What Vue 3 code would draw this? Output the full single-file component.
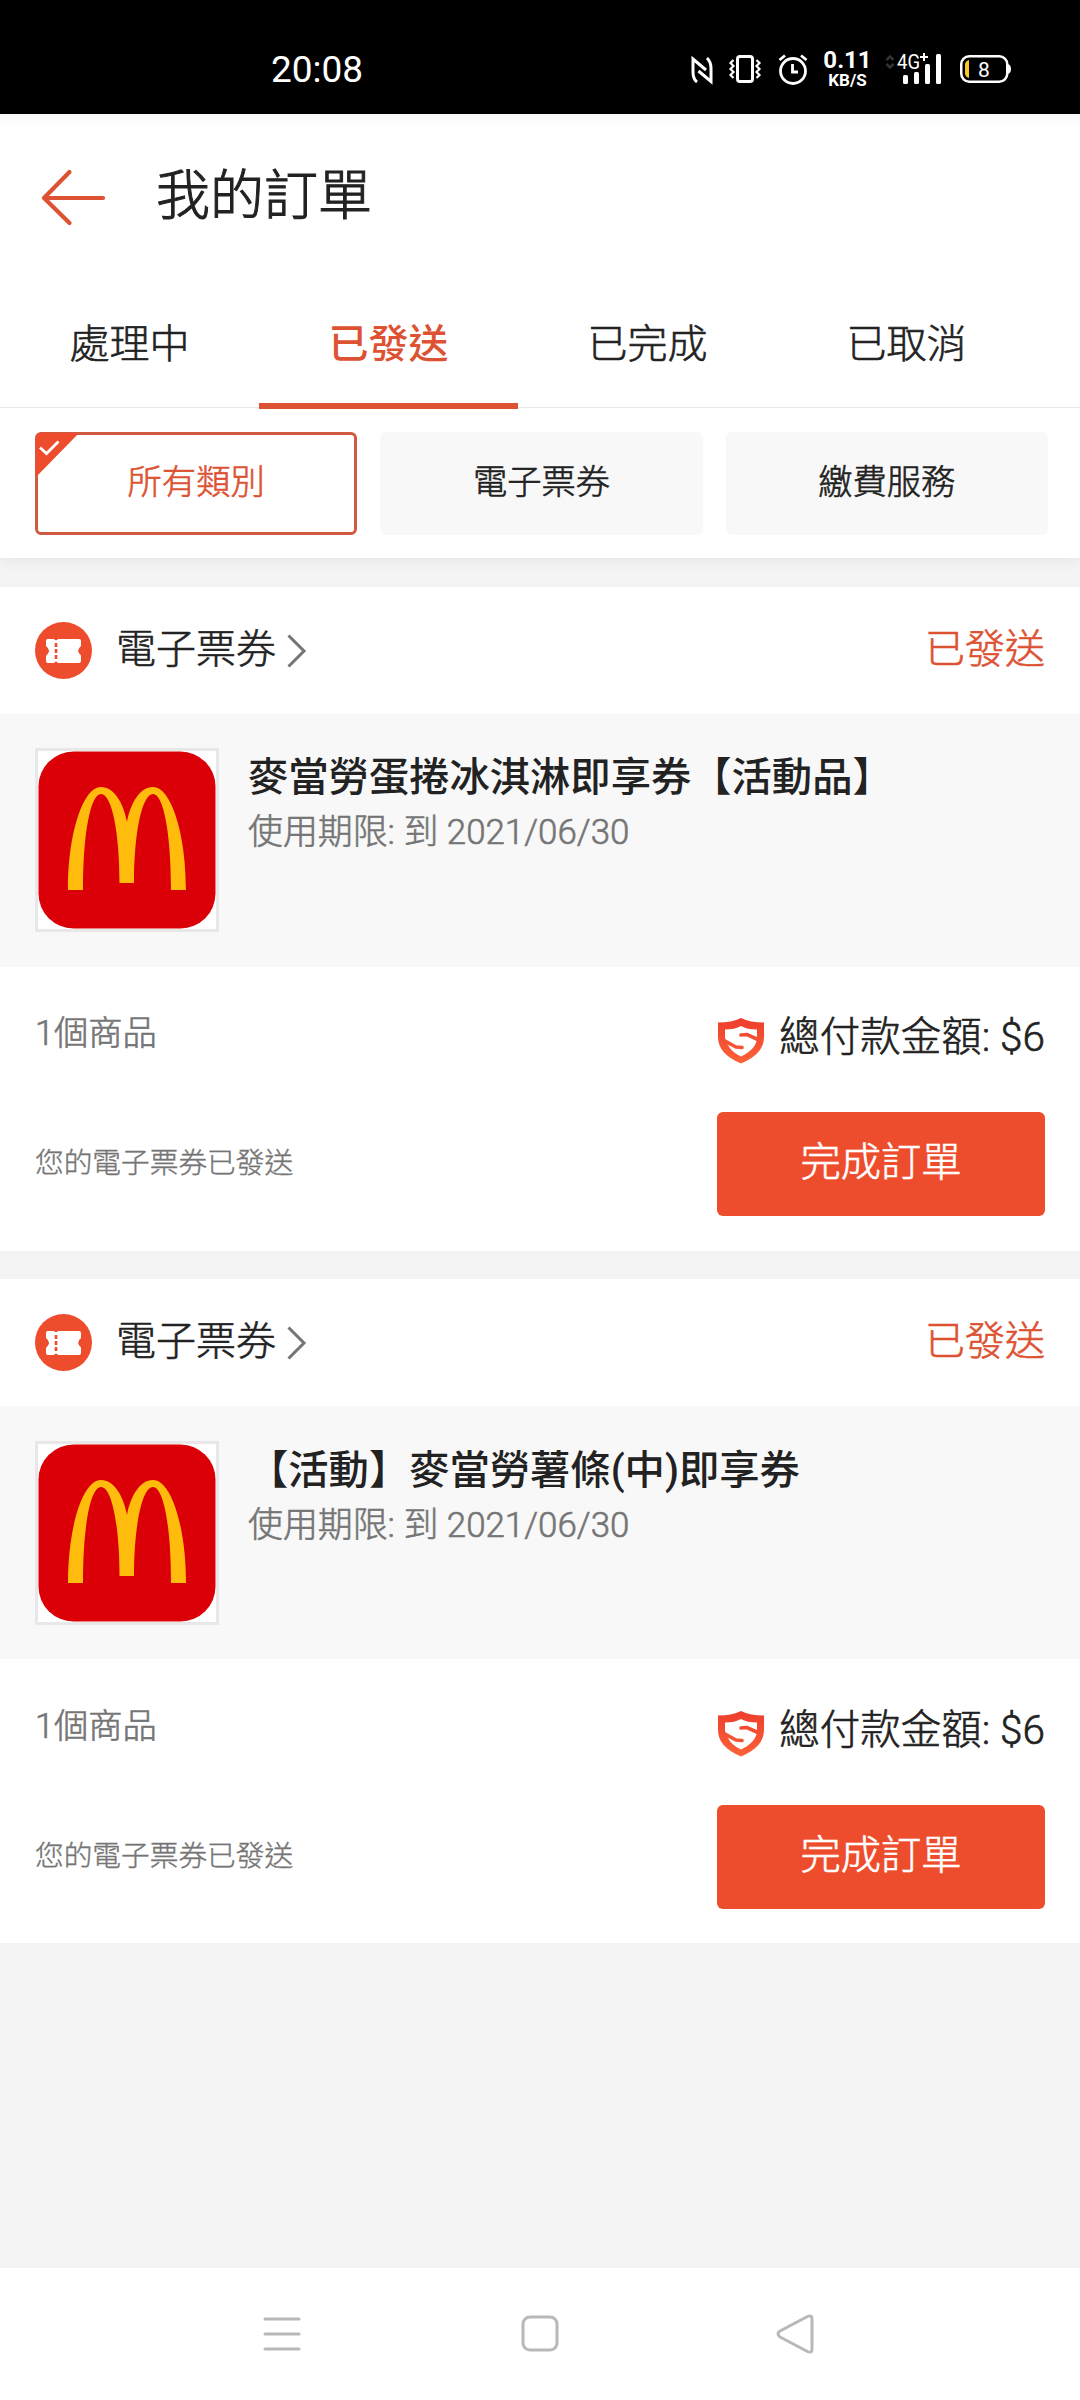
<script setup>
const tabs = ['處理中', '已發送', '已完成', '已取消']
const activeTab = '已發送'
const filters = ['所有類別', '電子票券', '繳費服務']
const activeFilter = '所有類別'
const orders = [
  { id: 1, title: '麥當勞蛋捲冰淇淋即享券【活動品】', expiry: '使用期限: 到 2021/06/30' },
  { id: 2, title: '【活動】麥當勞薯條(中)即享券', expiry: '使用期限: 到 2021/06/30' },
]
</script>

<template>
  <div class="screen">
    <div class="status">
      <span class="clock">20:08</span>
      <div class="indicators">
        <svg class="nfc" width="22" height="28" viewBox="0 0 22 28" fill="none" stroke="#fff" stroke-width="3">
          <path d="M6 26 Q2 23 2 16 V3 L15 14" />
          <path d="M7.500 15 L20 25.500 V12 Q20 6 16 2" />
        </svg>
        <svg class="vibrate" width="32" height="28" viewBox="0 0 32 28" fill="none" stroke="#fff">
          <rect x="8.500" y="1.500" width="15" height="25" rx="2.500" stroke-width="3" />
          <path d="M4.500 5 L1.500 8 L4.500 11 L1.500 14 L4.500 17 L1.500 20 L4.500 23 M27.500 5 L30.500 8 L27.500 11 L30.500 14 L27.500 17 L30.500 20 L27.500 23" stroke-width="2.200" />
        </svg>
        <svg class="alarm" width="30" height="31" viewBox="0 0 30 31" fill="none" stroke="#fff" stroke-width="2.800">
          <circle cx="15" cy="17" r="12.500" />
          <path d="M1.500 6 L7 1.500 M28.500 6 L23 1.500" />
          <path d="M14.500 10 V18 H20" />
        </svg>
        <div class="speed"><b class="rate">0.11</b><b class="unit">KB/S</b></div>
        <svg class="signal" width="57" height="32" viewBox="0 0 57 32">
          <path d="M1.500 7 L5 3.500 L8.500 7 M1.500 11 L5 14.500 L8.500 11" fill="none" stroke="#333" stroke-width="2.500" />
          <text x="12" y="16" class="network" textLength="23" lengthAdjust="spacingAndGlyphs">4G</text>
          <path d="M39 0 V8 M35 4 H43" stroke="#fff" stroke-width="2" />
          <g fill="#fff">
            <rect x="18" y="22" width="5" height="9" rx="1.500" />
            <rect x="29" y="19" width="5" height="12" rx="1.500" />
            <rect x="40" y="11" width="5" height="20" rx="1.500" />
            <rect x="51" y="1" width="5" height="30" rx="1.500" />
          </g>
        </svg>
        <svg class="battery" width="51" height="28" viewBox="0 0 51 28">
          <rect x="1.250" y="1.250" width="46" height="25.500" rx="8" fill="none" stroke="#fff" stroke-width="2.500" />
          <path d="M48 9 Q51 10 51 14 Q51 18 48 19 Z" fill="#fff" />
          <path d="M9 5 V23 Q5 22 5 18 V10 Q5 6 9 5 Z" fill="#fbc926" />
          <text x="24" y="22" class="charge">8</text>
        </svg>
      </div>
    </div>

    <header class="header">
      <svg width="64" height="56" viewBox="0 0 64 56" fill="none" stroke="#dd5232" stroke-width="4.200" stroke-linecap="round" stroke-linejoin="round">
        <path d="M27.500 3 L2 29 L27.500 54 M2 29 H61" />
      </svg>
      <h1>我的訂單</h1>
    </header>

    <nav class="tabs">
      <div v-for="t in tabs" :key="t" class="tab" :class="{ active: t === activeTab }">{{ t }}</div>
    </nav>

    <div class="filters">
      <div v-for="f in filters" :key="f" class="filter" :class="{ active: f === activeFilter }">
        <svg v-if="f === activeFilter" class="corner" width="43" height="44" viewBox="0 0 43 44">
          <path d="M0 5 Q0 0 5 0 H43 L0 44 Z" fill="#ee4d2d" />
          <path d="M4 14.500 L10.500 20.500 L22.500 8.500" fill="none" stroke="#fff" stroke-width="2.800" />
        </svg>
        {{ f }}
      </div>
    </div>

    <main class="list">
      <section v-for="o in orders" :key="o.id" class="card">
        <div class="card-head">
          <svg width="57" height="57" viewBox="0 0 57 57">
            <circle cx="28.500" cy="28.500" r="28.500" fill="#ee4d2d" />
            <path fill="#fff" d="M12.500 17 H19 Q21 19.500 23 17 H44 Q46 17 46 19 V24 Q40.500 28.500 46 33.500 V39 Q46 41 44 41 H23 Q21 38 19 41 H12.500 Q11 41 11 39 V34 Q17 28.500 11 24 V19 Q11 17 12.500 17 Z" />
            <path d="M21 21 V25 M21 27 V31 M21 33 V37" stroke="#ee4d2d" stroke-width="2.600" />
          </svg>
          <span class="category">電子票券</span>
          <svg class="chevron" width="20" height="34" viewBox="0 0 20 34" fill="none" stroke="#757575" stroke-width="3">
            <path d="M1.500 1.500 L17 17 L1.500 32.500" />
          </svg>
          <span class="state">已發送</span>
        </div>
        <div class="item">
          <svg class="thumb" width="184" height="184" viewBox="0 0 184 184">
            <rect x="1.500" y="1.500" width="181" height="181" fill="#fff" stroke="#e8e8e8" stroke-width="3" />
            <rect x="3.500" y="3.500" width="177" height="177" rx="35" fill="#db0007" />
            <path fill="#ffbc0d" d="M66 39 C79 39 88.500 55 92 74 C95.500 55 105 39 118 39 C136 39 151 85 151 142 H136 C136 85 128.500 46 118 46 C107 46 99 85 99 135 H84.500 C84.500 85 77 46 66 46 C55.500 46 48 85 48 142 H33 C33 85 48 39 66 39 Z" />
          </svg>
          <div class="info">
            <h2>{{ o.title }}</h2>
            <p>{{ o.expiry }}</p>
          </div>
        </div>
        <div class="summary">
          <span class="count">1個商品</span>
          <svg class="shield" width="46" height="46" viewBox="0 0 46 46">
            <defs>
              <linearGradient :id="'shield' + o.id" gradientUnits="userSpaceOnUse" x1="0" y1="0" x2="0" y2="46">
                <stop offset="0" stop-color="#ee3d2d" />
                <stop offset="1" stop-color="#fb6338" />
              </linearGradient>
            </defs>
            <path :fill="'url(#shield' + o.id + ')'" d="M23 0 Q32 4.500 46 4.500 V19 Q46 36 23 45.500 Q0 36 0 19 V4.500 Q14 4.500 23 0 Z" />
            <path fill="#fff" d="M7 11.500 Q17 11.500 23 8 Q29 11.500 39 11.500 V20 Q38.500 31 23 38.500 Q13 34 9.500 26 L7 20 Z" />
            <path fill="none" :stroke="'url(#shield' + o.id + ')'" stroke-width="3.600" stroke-linecap="round" d="M41 22 L29 16.500 L23 17 M6 22.500 L18 29 L24 29.500" />
          </svg>
          <span class="total">總付款金額: $6</span>
        </div>
        <div class="action">
          <span class="note">您的電子票券已發送</span>
          <button type="button">完成訂單</button>
        </div>
      </section>
    </main>

    <footer class="sysnav">
      <svg width="38" height="46" viewBox="0 0 38 46" stroke="#b8b8b8" stroke-width="3" stroke-linecap="round">
        <path d="M2 4 H36 M2 19 H36 M2 34 H36" />
      </svg>
      <svg width="38" height="46" viewBox="0 0 38 46" fill="none" stroke="#b8b8b8" stroke-width="3">
        <rect x="2" y="2" width="34" height="33" rx="7" />
      </svg>
      <svg class="back" width="38" height="46" viewBox="0 0 38 46" fill="none" stroke="#b8b8b8" stroke-width="3" stroke-linejoin="round">
        <path d="M31.500 1.500 Q36 -0.500 36 4 V34 Q36 38.500 31.500 36.500 L4 22 Q0 19 4 16 Z" />
      </svg>
    </footer>
  </div>
</template>

<style>
body { margin: 0; }
</style>

<style scoped>
.screen {
  width: 1080px;
  height: 2400px;
  display: flex;
  flex-direction: column;
  overflow: hidden;
  background: #f4f4f4;
  color: #222;
  font-family: Roboto, "Noto Sans CJK TC", sans-serif;
  font-weight: 300;
  -webkit-text-stroke-width: .6px;
}
h1, h2, p { margin: 0; font-weight: inherit; }
svg { display: block; flex: none; overflow: visible; }
.status {
  box-sizing: border-box;
  height: 114px;
  padding: 49px 69px 0 271px;
  display: flex;
  justify-content: space-between;
  align-items: flex-start;
  background: #000;
  color: #fff;
  -webkit-text-stroke-width: 0;
}
.clock { font-size: 37px; line-height: 41px; font-weight: 400; }
.indicators { display: flex; }
.nfc { margin: 7px 16px 0 0; }
.vibrate { margin: 6px 17px 0 0; }
.alarm { margin: 5px 16px 0 0; }
.speed { width: 47px; margin-right: 14px; display: flex; flex-direction: column; align-items: center; }
.rate { font-size: 24px; line-height: 23px; font-weight: 700; white-space: nowrap; }
.unit { font-size: 17px; line-height: 16px; font-weight: 700; }
.signal { margin: 4px 18px 0 0; }
.network { font: 400 20px Roboto, sans-serif; fill: #fff; }
.battery { margin-top: 6px; }
.charge { font: 400 21px Roboto, sans-serif; fill: #fff; text-anchor: middle; }
.header {
  height: 166px;
  padding-left: 42px;
  display: flex;
  align-items: center;
  gap: 50px;
  background: linear-gradient(#f8f8f8, #fff 14px);
}
.header h1 { font-size: 54px; line-height: 70px; -webkit-text-stroke-width: 1px; }
.tabs {
  position: relative;
  z-index: 1;
  box-sizing: border-box;
  height: 128px;
  padding-right: 44px;
  display: flex;
  background: #fff;
  border-bottom: 1px solid #e8e8e8;
}
.tab {
  box-sizing: border-box;
  width: 259px;
  height: 129px;
  line-height: 129px;
  text-align: center;
  font-size: 40px;
}
.tab.active {
  color: #dd5232;
  font-weight: 500;
  border-bottom: 6px solid #dd5232;
  -webkit-text-stroke-width: 0;
}
.filters {
  height: 103px;
  padding: 24px 32px 23px 35px;
  display: flex;
  gap: 23px;
  background: #fff;
  box-shadow: 0 2px 14px rgba(0, 0, 0, .07);
}
.filter {
  position: relative;
  box-sizing: border-box;
  flex: 1;
  border: 3px solid #f8f8f8;
  border-radius: 6px;
  background: #f8f8f8;
  font-size: 34.300px;
  line-height: 94px;
  text-align: center;
}
.filter.active { background: #fff; border-color: #cf5a41; color: #dd5232; }
.corner { position: absolute; left: -2px; top: -2px; }
.list { flex: 1; padding-top: 29px; display: flex; flex-direction: column; gap: 28px; }
.card { position: relative; background: #fff; height: 664px; }
.card-head {
  box-sizing: border-box;
  height: 127px;
  padding: 0 35px;
  display: flex;
  align-items: center;
  font-size: 40px;
}
.category { margin-left: 24px; line-height: 60px; padding-bottom: 2px; }
.chevron { margin-left: 11px; }
.state { margin-left: auto; color: #dd5232; line-height: 60px; padding-bottom: 2px; }
.item {
  box-sizing: border-box;
  height: 253px;
  padding: 34px 35px 0;
  display: flex;
  align-items: flex-start;
  gap: 29px;
  background: #f8f8f8;
}
.info h2 { padding-top: 2px; font-size: 40.300px; line-height: 55px; font-weight: 500; -webkit-text-stroke-width: 0; }
.info p { font-size: 34.900px; line-height: 55px; color: #757575; }
.summary { height: 100px; padding: 45px 35px 0; display: flex; align-items: flex-start; }
.count { flex: 1; font-size: 34.300px; line-height: 43px; color: #757575; }
.shield { margin-top: 6px; }
.total { margin-left: 15px; font-size: 40.500px; line-height: 51px; }
.action { padding: 0 35px; display: flex; align-items: center; justify-content: space-between; }
.note { font-size: 28.700px; line-height: 40px; color: #757575; padding-bottom: 2px; -webkit-text-stroke-width: .4px; }
.action button {
  width: 328px;
  height: 104px;
  padding: 0 0 2px;
  border: 0;
  border-radius: 6px;
  background: #ee4d2d;
  color: #fff;
  font: inherit;
  font-size: 40.300px;
  line-height: 60px;
  -webkit-text-stroke-width: .6px;
}
.card + .card .item { padding-top: 35px; }
.card + .card .summary { padding-top: 46px; }
.sysnav {
  box-sizing: border-box;
  height: 132px;
  padding: 47px 263px 0;
  display: flex;
  justify-content: space-between;
  background: #fff;
}
.back { margin-left: -3px; margin-right: 3px; }
</style>
